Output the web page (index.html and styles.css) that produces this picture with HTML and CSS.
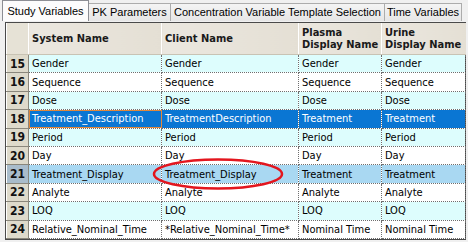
FILE: index.html
```html
<!DOCTYPE html>
<html lang="en">
<head>
    <meta charset="UTF-8">
    <title>Study Variables</title>
    <link rel="stylesheet" href="styles.css">
</head>
<body>
<div class="tabs">
    <div class="tab active tab-study">Study Variables</div>
    <div class="tab tab-pk">PK Parameters</div>
    <div class="tab tab-conc">Concentration Variable Template Selection</div>
    <div class="tab tab-time">Time Variables</div>
</div>
<div class="panel">
    <div class="grid-wrap">
        <table class="grid">
            <colgroup>
                <col class="c-num">
                <col class="c-sys">
                <col class="c-client">
                <col class="c-plasma">
                <col class="c-urine">
            </colgroup>
            <thead>
            <tr>
                <th class="corner"></th>
                <th>System Name</th>
                <th>Client Name</th>
                <th>Plasma<br>Display Name</th>
                <th>Urine<br>Display Name</th>
            </tr>
            </thead>
            <tbody>
            <tr class="alt"><td class="num">15</td><td>Gender</td><td>Gender</td><td>Gender</td><td>Gender</td></tr>
            <tr><td class="num">16</td><td>Sequence</td><td>Sequence</td><td>Sequence</td><td>Sequence</td></tr>
            <tr class="alt"><td class="num">17</td><td>Dose</td><td>Dose</td><td>Dose</td><td>Dose</td></tr>
            <tr class="selected"><td class="num">18</td><td class="focus">Treatment_Description</td><td>TreatmentDescription</td><td>Treatment</td><td>Treatment</td></tr>
            <tr class="alt"><td class="num">19</td><td>Period</td><td>Period</td><td>Period</td><td>Period</td></tr>
            <tr><td class="num">20</td><td>Day</td><td>Day</td><td>Day</td><td>Day</td></tr>
            <tr class="current"><td class="num">21</td><td>Treatment_Display</td><td>Treatment_Display</td><td>Treatment</td><td>Treatment</td></tr>
            <tr><td class="num">22</td><td>Analyte</td><td>Analyte</td><td>Analyte</td><td>Analyte</td></tr>
            <tr class="alt"><td class="num">23</td><td>LOQ</td><td>LOQ</td><td>LOQ</td><td>LOQ</td></tr>
            <tr><td class="num">24</td><td>Relative_Nominal_Time</td><td>*Relative_Nominal_Time*</td><td>Nominal Time</td><td>Nominal Time</td></tr>
            </tbody>
        </table>
        <!-- hand drawn mark around the client name -->
        <svg class="mark" width="140" height="40" viewBox="0 0 140 40">
            <ellipse cx="70" cy="20" rx="64" ry="14.5" fill="none" stroke="#e3161e" stroke-width="2.5"/>
        </svg>
    </div>
</div>
</body>
</html>
```

FILE: styles.css
```css
body {
    margin: 0;
    background: #f0f0f0;
    width: 468px;
    height: 242px;
    overflow: hidden;
}

.tabs {
    display: flex;
    align-items: flex-end;
    height: 21px;
    padding-left: 2px;
    font-family: "Liberation Sans", Arial, sans-serif;
    font-size: 11px;
    color: #000;
}

.tab {
    flex-shrink: 0;
    box-sizing: border-box;
    height: 18px;
    line-height: 17px;
    text-align: center;
    white-space: nowrap;
    background: linear-gradient(#f4f4f4, #e6e6e6);
    border: 1px solid #acacac;
    border-bottom: none;
    margin-right: -1px;
}

.tab.active {
    height: 21px;
    line-height: 20px;
    background: #fcfcfc;
    border-color: #8c8e94;
    position: relative;
    z-index: 1;
}

.tab-study { width: 87px; }
.tab-pk { width: 83px; }
.tab-conc { width: 215px; }
.tab-time { width: 78px; }

.panel {
    padding: 1px 0 0 5px;
}

.grid-wrap {
    position: relative;
    width: 459px;
    border: 1px solid #4a4a4a;
    background: #fff;
}

.grid {
    border-collapse: collapse;
    table-layout: fixed;
    width: 459px;
    font-family: "DejaVu Sans Condensed", "DejaVu Sans", sans-serif;
    font-size: 11px;
    color: #000;
}

.c-num { width: 22px; }
.c-sys { width: 133px; }
.c-client { width: 137px; }
.c-plasma { width: 83px; }
.c-urine { width: 84px; }

.grid th {
    height: 31px;
    padding: 0 3px;
    text-align: left;
    vertical-align: middle;
    font-weight: bold;
    line-height: 12px;
    color: #1a1a1a;
    background: linear-gradient(90deg, #ebe7df, #e4dfd4);
    border-left: 1px solid #fff;
    border-bottom: 1px solid #c8c3b4;
    white-space: nowrap;
}

.grid th.corner {
    border-left: none;
    background: #e6e2d6;
}

.grid td {
    height: 17.4px;
    padding: 0 3px;
    white-space: nowrap;
    overflow: hidden;
    border-right: 1px dotted #6e6e6e;
    border-bottom: 1px dotted #6e6e6e;
}

.grid tr.alt td {
    background: #ddfdfd;
}

.grid tr.selected td {
    background: #0a76d3;
    color: #fff;
}

.grid tr.current td {
    background: #a9d8f2;
}

.grid td.focus {
    outline: 1px solid #e0883c;
    outline-offset: -1px;
}

.grid td.num,
.grid tr.alt td.num,
.grid tr.selected td.num {
    padding: 0;
    text-align: center;
    font-size: 12px;
    font-weight: bold;
    color: #111;
    background: #dedacb;
    border-top: 1px solid #fff;
    border-left: 1px solid #fff;
    border-right: 1px solid #8a877c;
    border-bottom: 1px solid #8a877c;
}

.grid tr.current td.num {
    background: #a9bccb;
}

.mark {
    position: absolute;
    left: 142px;
    top: 131px;
}
```
